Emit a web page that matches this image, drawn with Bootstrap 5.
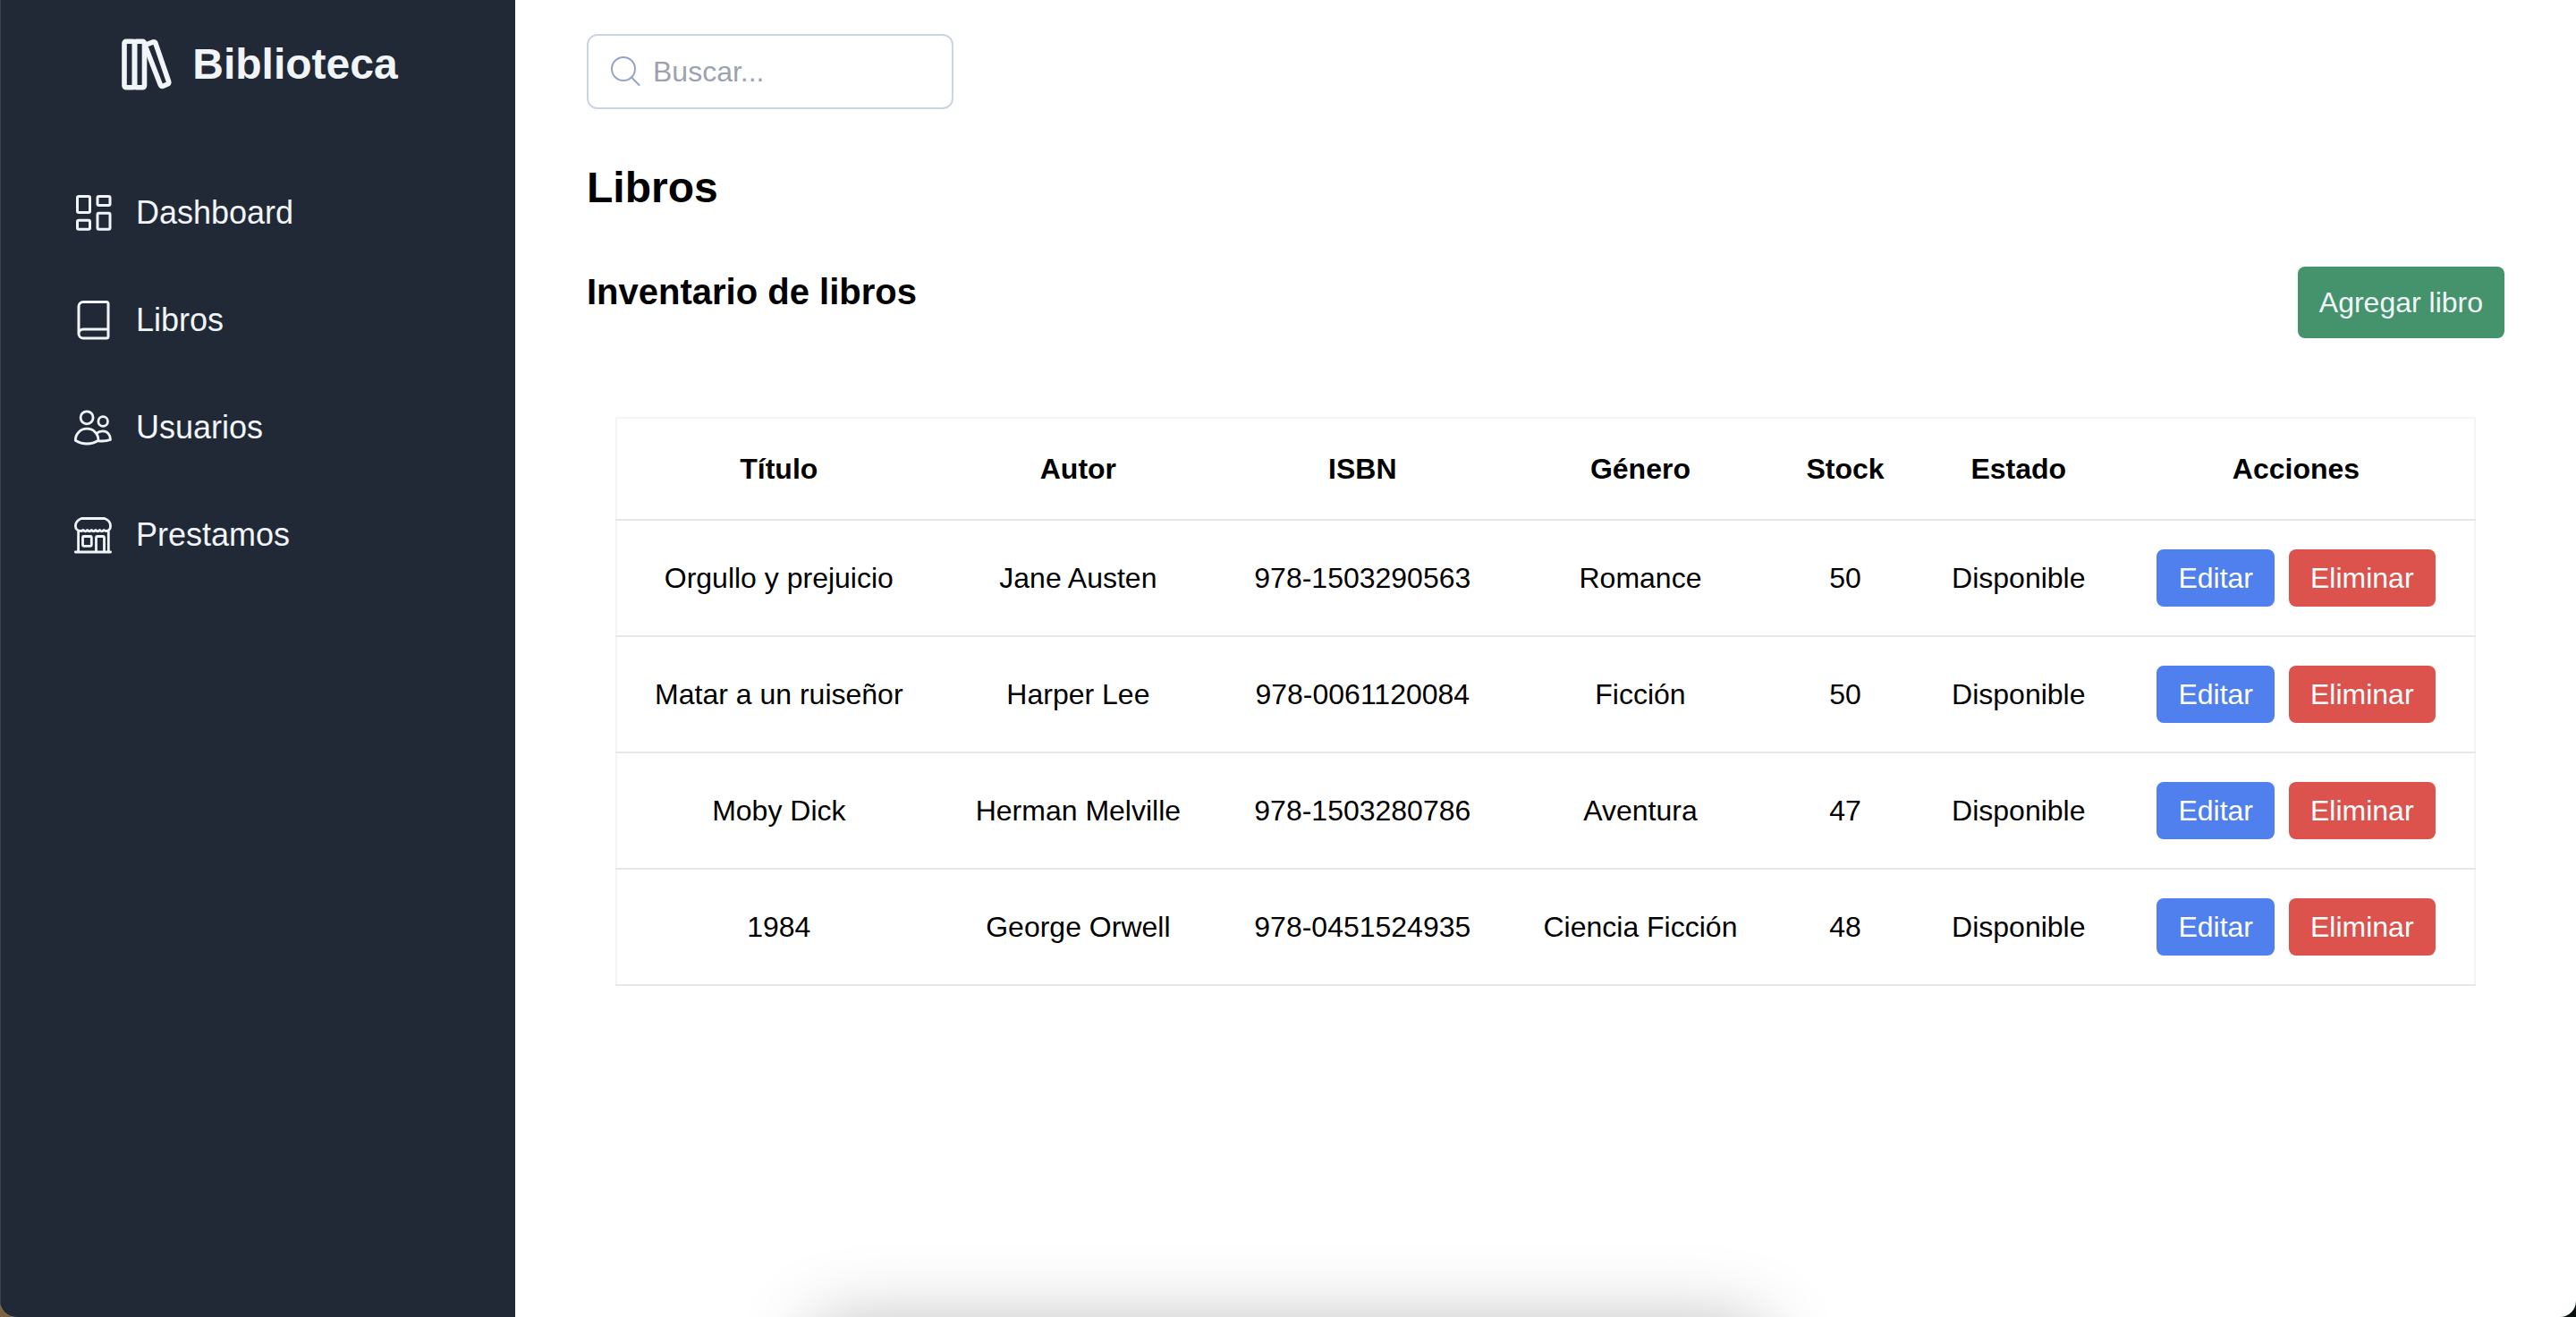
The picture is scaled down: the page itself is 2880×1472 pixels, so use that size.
<!DOCTYPE html>
<html lang="es">
<head>
<meta charset="utf-8">
<meta name="viewport" content="width=device-width, initial-scale=1">
<title>Biblioteca</title>
<link href="https://cdn.jsdelivr.net/npm/bootstrap@5.3.0/dist/css/bootstrap.min.css" rel="stylesheet">
<style>
html { background: linear-gradient(to right, #7d6340 50%, #0a100e 50%); }
body { font-family: "Liberation Sans", Arial, sans-serif; font-size: 32px; line-height: 48px; color: #000; background: transparent; }
.app-shell { background: #fff; border-radius: 0 0 18px 18px; overflow: hidden; }
.sidebar { flex: 0 0 20%; background: #222936; box-shadow: inset 1px 0 #3b4350; }
.brand { gap: 20px; padding-top: 40px; color: #f1f5f9; font-size: 48px; line-height: 64px; }
.side-nav { margin-top: 74px; }
.side-nav .nav-link { gap: 24px; padding: 32px 80px; font-size: 36px; line-height: 56px; color: #f1f5f9; }
.main-area { padding: 38px 80px; }
.search-box { width: 410px; height: 84px; padding: 0 22px; gap: 10px; border: 2px solid #cbd5e1; border-radius: 12px; }
.search-box .search-icon { stroke: #94a3c8; }
.search-box .form-control { font-size: 32px; line-height: 48px; }
.search-box .form-control::placeholder { color: #9ca3af; }
.page-title { margin: 56px 0; font-size: 48px; line-height: 64px; }
.section-title { font-size: 40px; line-height: 56px; }
.btn { --bs-btn-border-width: 0; --bs-btn-border-radius: 8px; --bs-btn-font-size: 32px; --bs-btn-line-height: 48px; --bs-btn-padding-x: 24px; --bs-btn-padding-y: 8px; }
.btn-add { --bs-btn-bg: #45936c; --bs-btn-color: #f1f5f9; --bs-btn-hover-bg: #3a7f5c; --bs-btn-hover-color: #fff; --bs-btn-padding-y: 16px; }
.btn-edit { --bs-btn-bg: #4f80ee; --bs-btn-color: #fff; --bs-btn-hover-bg: #3d6bd6; --bs-btn-hover-color: #fff; }
.btn-remove { --bs-btn-bg: #dc524d; --bs-btn-color: #fff; --bs-btn-hover-bg: #c2413c; --bs-btn-hover-color: #fff; }
.table-wrap { margin: 88px 32px 0; }
.book-table { --bs-table-color: #000; --bs-table-bg: transparent; table-layout: fixed; border: 2px solid #f3f4f6; }
.book-table > :not(caption) > * > * { padding: 32px 0; border-bottom: 2px solid #e5e7eb; }
.book-table > tbody > tr > td { height: 130px; }
.col-title { width: 17.45%; }
.col-author { width: 14.8%; }
.col-isbn { width: 15.8%; }
.col-genre { width: 14.1%; }
.col-stock { width: 7.95%; }
.col-state { width: 10.7%; }
.dock-shadow { left: 31.5%; right: 31.5%; bottom: -108px; height: 100px; border-radius: 30px; box-shadow: 0 0 84px rgba(0, 0, 0, .28); pointer-events: none; }
svg { flex: none; fill: none; stroke: currentColor; stroke-linecap: round; stroke-linejoin: round; }
</style>
</head>
<body>
<div class="app-shell d-flex min-vh-100">
  <aside class="sidebar">
    <div class="brand d-flex justify-content-center align-items-center fw-bold">
      <svg width="64" height="64" viewBox="0 0 64 64" stroke-width="5.6" aria-hidden="true">
        <rect x="8" y="6.300" width="11.500" height="51.500" rx="2"/>
        <rect x="19.500" y="6.300" width="11" height="51.500" rx="2"/>
        <path d="M34.500 9.200 40.300 6.900a2 2 0 0 1 2.500 1.200L57.700 51.500a2 2 0 0 1-1.200 2.500l-5.600 2.300a2 2 0 0 1-2.500-1.200L32.500 14"/>
      </svg>
      <span>Biblioteca</span>
    </div>
    <nav class="side-nav nav flex-column" aria-label="Principal">
      <a class="nav-link d-flex align-items-center" href="#">
        <svg width="48" height="48" viewBox="0 0 48 48" stroke-width="3" aria-hidden="true"><rect x="6.500" y="5.500" width="14" height="18" rx="1.500"/><rect x="6.500" y="32.200" width="14" height="10" rx="1.500"/><rect x="29" y="5.500" width="14" height="10" rx="1.500"/><rect x="29" y="24.200" width="14" height="18" rx="1.500"/></svg>
        <span>Dashboard</span>
      </a>
      <a class="nav-link d-flex align-items-center" href="#">
        <svg width="48" height="48" viewBox="0 0 48 48" stroke-width="3" aria-hidden="true"><path d="M8 39V8.500a5 5 0 0 1 5-5h26a2 2 0 0 1 2 2V42a2 2 0 0 1-2 2H13a5 5 0 0 1 0-10h28"/></svg>
        <span>Libros</span>
      </a>
      <a class="nav-link d-flex align-items-center" href="#">
        <svg width="48" height="48" viewBox="0 0 48 48" stroke-width="2.800" aria-hidden="true"><circle cx="17.100" cy="12.800" r="7"/><circle cx="35.200" cy="17" r="5.300"/><path d="M4.300 38.200C4.300 30.800 10 25.200 17.200 25.200S30 30.800 30 38.200Q24 42 17.200 42T4.300 38.200Z"/><path d="M28 30.400C30 28.600 32.500 27.900 35 27.900c5 0 8.500 4.300 8.500 9.500q-6 2.200-13.500 1.400"/></svg>
        <span>Usuarios</span>
      </a>
      <a class="nav-link d-flex align-items-center" href="#">
        <svg width="48" height="48" viewBox="0 0 48 48" stroke-width="2.800" aria-hidden="true"><path d="M11 5.500H37C41 7 43.500 10 43.500 14c0 3-2 5.500-4.700 5.500q-1.500 0-2.700-1-2.200 2.600-4.600 0-2.300 2.600-4.600 0-2.300 2.600-4.600 0-2.300 2.600-4.600 0-2.200 2.600-4.600 0-1.400 1-3 1c-3.300 0-5.700-2.500-5.700-5.500 0-4 2.700-7 6.600-8.500ZM7.600 19.500V43M41.300 19.500V43M4.300 43h39.300M27.500 43V27a1.500 1.500 0 0 1 1.500-1.500h6A1.500 1.500 0 0 1 36.500 27v16"/><rect x="12.500" y="25.500" width="9.800" height="10.800" rx="1"/></svg>
        <span>Prestamos</span>
      </a>
    </nav>
  </aside>

  <main class="main-area flex-grow-1">
    <div class="search-box d-flex align-items-center">
      <svg class="search-icon" width="40" height="40" viewBox="0 0 40 40" stroke-width="2" aria-hidden="true"><circle cx="17" cy="17" r="13"/><path d="M26 26.500 34.500 35"/></svg>
      <input type="search" class="form-control border-0 p-0 shadow-none bg-transparent" placeholder="Buscar..." aria-label="Buscar">
    </div>

    <h1 class="page-title fw-bold">Libros</h1>

    <div class="d-flex justify-content-between align-items-start">
      <h2 class="section-title fw-bold mb-0">Inventario de libros</h2>
      <button type="button" class="btn btn-add">Agregar libro</button>
    </div>

    <div class="table-wrap">
      <table class="book-table table text-center align-middle mb-0">
        <colgroup><col class="col-title"><col class="col-author"><col class="col-isbn"><col class="col-genre"><col class="col-stock"><col class="col-state"><col></colgroup>
        <thead>
          <tr><th scope="col">Título</th><th scope="col">Autor</th><th scope="col">ISBN</th><th scope="col">Género</th><th scope="col">Stock</th><th scope="col">Estado</th><th scope="col">Acciones</th></tr>
        </thead>
        <tbody>
          <tr><td>Orgullo y prejuicio</td><td>Jane Austen</td><td>978-1503290563</td><td>Romance</td><td>50</td><td>Disponible</td>
            <td><div class="d-flex justify-content-center gap-3"><button type="button" class="btn btn-edit">Editar</button><button type="button" class="btn btn-remove">Eliminar</button></div></td></tr>
          <tr><td>Matar a un ruiseñor</td><td>Harper Lee</td><td>978-0061120084</td><td>Ficción</td><td>50</td><td>Disponible</td>
            <td><div class="d-flex justify-content-center gap-3"><button type="button" class="btn btn-edit">Editar</button><button type="button" class="btn btn-remove">Eliminar</button></div></td></tr>
          <tr><td>Moby Dick</td><td>Herman Melville</td><td>978-1503280786</td><td>Aventura</td><td>47</td><td>Disponible</td>
            <td><div class="d-flex justify-content-center gap-3"><button type="button" class="btn btn-edit">Editar</button><button type="button" class="btn btn-remove">Eliminar</button></div></td></tr>
          <tr><td>1984</td><td>George Orwell</td><td>978-0451524935</td><td>Ciencia Ficción</td><td>48</td><td>Disponible</td>
            <td><div class="d-flex justify-content-center gap-3"><button type="button" class="btn btn-edit">Editar</button><button type="button" class="btn btn-remove">Eliminar</button></div></td></tr>
        </tbody>
      </table>
    </div>
  </main>
</div>
<div class="dock-shadow position-fixed"></div>
<script src="https://cdn.jsdelivr.net/npm/bootstrap@5.3.0/dist/js/bootstrap.bundle.min.js"></script>
</body>
</html>
